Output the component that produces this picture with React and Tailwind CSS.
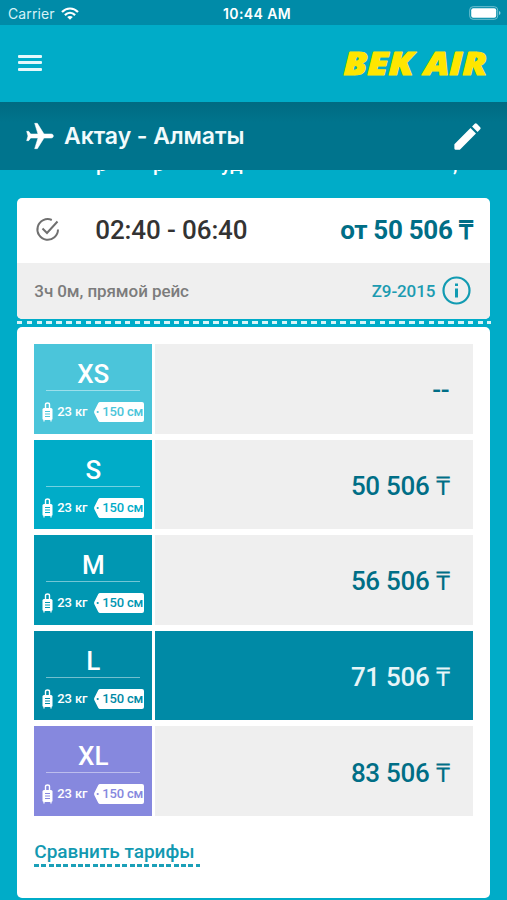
import React from 'react';

const tariffs = [
  { size: 'XS', price: '--', tile: 'bg-[#4bc5da]', tag: 'text-[#4bc5da]', active: false },
  { size: 'S', price: '50 506 ₸', tile: 'bg-[#00acc8]', tag: 'text-[#00acc8]', active: false },
  { size: 'M', price: '56 506 ₸', tile: 'bg-[#0097b2]', tag: 'text-[#0097b2]', active: false },
  { size: 'L', price: '71 506 ₸', tile: 'bg-[#008aa6]', tag: 'text-[#008aa6]', active: true },
  { size: 'XL', price: '83 506 ₸', tile: 'bg-[#8688de]', tag: 'text-[#8688de]', active: false },
];

const StatusBar = () => (
  <div className="h-[25px] bg-[#008ba8] grid grid-cols-3 items-center pl-2 pr-1.5 font-['Inter',sans-serif] text-white">
    <div className="flex items-center gap-[6px] pt-[3px]">
      <span className="text-[14px] leading-4 tracking-[0.1px] text-[#d5f2f7]">Carrier</span>
      <svg className="w-[18px] h-[13px] mt-[-2px]" viewBox="0 0 18 13" fill="none" stroke="white" strokeWidth="2.2">
        <path d="M1 5C5.6.3 12.4.3 17 5" />
        <path d="M3.9 8.1c3-3 7.2-3 10.2 0" />
        <path d="M9 12.8 6.2 10c1.600-1.400 4-1.400 5.600 0z" fill="white" stroke="none" />
      </svg>
    </div>
    <span className="pt-[3px] pl-[5px] text-center text-[14px] leading-4 font-semibold tracking-[0.4px] whitespace-nowrap">10:44 AM</span>
    <svg className="w-[32px] h-[14px] justify-self-end mt-px" viewBox="0 0 32 14">
      <rect x="0.7" y="0.7" width="28" height="12.6" rx="3.4" fill="none" stroke="#6fc0d0" />
      <rect x="2.2" y="2.2" width="25" height="9.600" rx="2" fill="white" />
      <path d="M30 5v4q1.500-.6 1.500-2T30 5z" fill="#8fd0dc" />
    </svg>
  </div>
);

const Header = () => (
  <header className="h-[77px] flex items-center justify-between pl-[18px] pr-[15px]">
    <div className="w-6 flex flex-col gap-[3.5px] mt-[-2px]">
      <span className="h-[3px] rounded-[1px] bg-[#e6f8fb]" />
      <span className="h-[3px] rounded-[1px] bg-[#e6f8fb]" />
      <span className="h-[3px] rounded-[1px] bg-[#e6f8fb]" />
    </div>
    <svg
      className="w-[152px] h-[50px] font-['Open_Sans',sans-serif] font-extrabold italic text-[31px]"
      viewBox="0 0 152 50"
      fill="#ffe600"
      stroke="#ffe600"
      strokeWidth="1.2"
      strokeLinejoin="round"
    >
      <text x="3.500" y="35.500" textLength="70" lengthAdjust="spacingAndGlyphs">BEK</text>
      <text x="84" y="35.500" textLength="63" lengthAdjust="spacingAndGlyphs">AIR</text>
    </svg>
  </header>
);

const RouteBar = () => (
  <div className="h-[68px] flex items-center justify-between pl-6 pr-6 bg-linear-to-b from-[#006b82] to-[#00748d] to-30%">
    <div className="flex items-center gap-2">
      <svg className="w-8 h-8 rotate-90" viewBox="0 0 24 24" fill="white" stroke="white" strokeWidth="0.4">
        <path d="M21.500 16v-2L13.500 9V3.500c0-.83-.67-1.500-1.500-1.500S10.500 2.670 10.500 3.500V9l-8 5v2l8-2.500V19l-2 1.500V22l3.500-1 3.500 1v-1.500L13.500 19v-5.500l8 2.500z" />
      </svg>
      <h1 className="pt-px font-['Inter',sans-serif] font-semibold text-[23px] tracking-[-0.05px] text-[#f2fbfc] whitespace-nowrap">Актау - Алматы</h1>
    </div>
    <svg className="w-[35px] h-[35px] mr-[-2px]" viewBox="0 0 24 24" fill="white">
      <path d="M3 17.250V20.300q0 .7.700.7H6.750L17.810 9.940l-3.750-3.750L3 17.250zM20.710 7.040a1 1 0 0 0 0-1.410l-2.340-2.340a1 1 0 0 0-1.410 0l-1.830 1.830 3.750 3.750 1.830-1.830z" />
    </svg>
  </div>
);

// Only the descenders of the line scrolled under the route bar stay visible
const ScrolledLine = () => (
  <div className="h-[28px] overflow-hidden">
    <div className="flex h-[5px] items-end overflow-hidden pl-[96px] text-[20px] leading-[22px] font-medium text-white">
      <span className="w-[57px]">р</span>
      <span className="w-[68px]">р</span>
      <span className="w-[232px]">уд</span>
      <span>,</span>
    </div>
  </div>
);

const FlightCard = () => (
  <section className="h-[121px] rounded-[5px] overflow-hidden bg-white">
    <div className="h-[65px] flex items-center justify-between pl-[17px] pr-[18px]">
      <div className="flex items-center">
        <svg className="w-[25px] h-[25px] mt-[-2px] ml-px" viewBox="0 0 25 25" fill="none" stroke="#707070" strokeWidth="2">
          <path d="M23 12.500A10.300 10.300 0 1 1 16.800 3" />
          <path d="m7.500 11.500 4.500 4.500L22.500 4.500" />
        </svg>
        <span className="ml-[35px] text-[26px] font-medium tracking-[-0.12px] text-[#333] whitespace-nowrap">02:40 - 06:40</span>
      </div>
      <span className="text-[26px] font-bold tracking-[-0.32px] text-[#006e86] whitespace-nowrap">от 50 506 ₸</span>
    </div>
    <div className="h-14 flex items-center justify-between pl-[17px] pr-[19px] bg-[#efefef]">
      <span className="pt-px text-[17px] font-medium tracking-[-0.08px] text-[#7c7c7c] whitespace-nowrap">3ч 0м, прямой рейс</span>
      <div className="flex items-center gap-[7px]">
        <span className="pt-px text-[17px] font-medium tracking-[-0.1px] text-[#1c9bb1]">Z9-2015</span>
        <svg className="w-[29px] h-[29px] mt-[-2px]" viewBox="0 0 29 29" fill="none" stroke="#129bb2">
          <circle cx="14.500" cy="14.500" r="13" strokeWidth="2.200" />
          <path d="M14.500 12.500V21.500M14.500 7.500V10" strokeWidth="3" />
        </svg>
      </div>
    </div>
  </section>
);

const Luggage = () => (
  <svg className="w-[11px] h-5" viewBox="0 0 11 20">
    <path d="M3.500 8V2.500Q3.500 1 5.500 1T7.500 2.500V8" fill="none" stroke="white" strokeWidth="1.400" />
    <rect x="0.500" y="6" width="10" height="12" rx="1.500" fill="white" />
    <path d="M2 18v1.500M9 18v1.500" stroke="white" strokeWidth="1.200" />
    <path d="M3 9.500h5M3 12h5M3 14.500h5" stroke="currentColor" strokeWidth="1.100" />
  </svg>
);

const SizeTag = () => (
  <div className="relative w-[50px] h-5">
    <svg className="absolute inset-0" viewBox="0 0 50 20">
      <path d="M6 0H48Q50 0 50 2V18Q50 20 48 20H6Q5 20 4.300 19L.5 11.500Q-.3 10 .5 8.500L4.300 1Q5 0 6 0z" fill="white" />
      <circle cx="3.700" cy="10" r="1.100" fill="currentColor" />
    </svg>
    <span className="relative block pl-2 text-[13px] leading-5 font-medium tracking-[-0.2px] whitespace-nowrap">150 см</span>
  </div>
);

const TariffRow = ({ tariff }) => (
  <div className="flex gap-[3px] h-[89.6px]">
    <div className={`w-[118px] ${tariff.tile}`}>
      <div className="mx-3 h-[46px] pt-[14px] text-center text-[26px] leading-8 font-medium text-white">{tariff.size}</div>
      <div className="mx-3 h-px bg-white/45" />
      <div className={`mt-[11px] pl-2 flex items-center ${tariff.tag}`}>
        <Luggage />
        <span className="ml-1 w-[37px] text-[13px] leading-5 font-medium tracking-[-0.1px] text-white whitespace-nowrap">23 кг</span>
        <SizeTag />
      </div>
    </div>
    <div
      className={`flex-1 flex items-center justify-end pr-[24px] pt-[4px] text-[26px] tracking-[-0.3px] font-medium ${
        tariff.active ? 'bg-[#008aa6] text-[#e6f5f8]' : 'bg-[#efefef] text-[#006e86]'
      }`}
    >
      {tariff.price}
    </div>
  </div>
);

const App = () => {
  return (
    <div className="w-[507px] h-[900px] overflow-hidden bg-[#00acc8] font-['Roboto',sans-serif]">
      <StatusBar />
      <Header />
      <RouteBar />
      <ScrolledLine />
      <main className="pl-[17.3px] pr-[16.7px]">
        <FlightCard />
        <div className="mt-[2px] mb-[3px] mr-[-1px] h-[3px] bg-[repeating-linear-gradient(90deg,#d9f3f7_0_5.500px,transparent_5.500px_9.800px)]" />
        <section className="h-[571px] rounded-[5px] bg-white pt-[17px] px-[17px]">
          <div className="flex flex-col gap-[6px]">
            {tariffs.map((tariff) => (
              <TariffRow key={tariff.size} tariff={tariff} />
            ))}
          </div>
          <a className="mt-[24px] inline-block w-[166px] text-[19px] leading-6 font-medium tracking-[-0.03px] text-[#1299b1] whitespace-nowrap">
            Сравнить тарифы
            <span className="block h-[3px] bg-[repeating-linear-gradient(90deg,#1ba0b8_0_5px,transparent_5px_7.350px)]" />
          </a>
        </section>
      </main>
    </div>
  );
};

export default App;
